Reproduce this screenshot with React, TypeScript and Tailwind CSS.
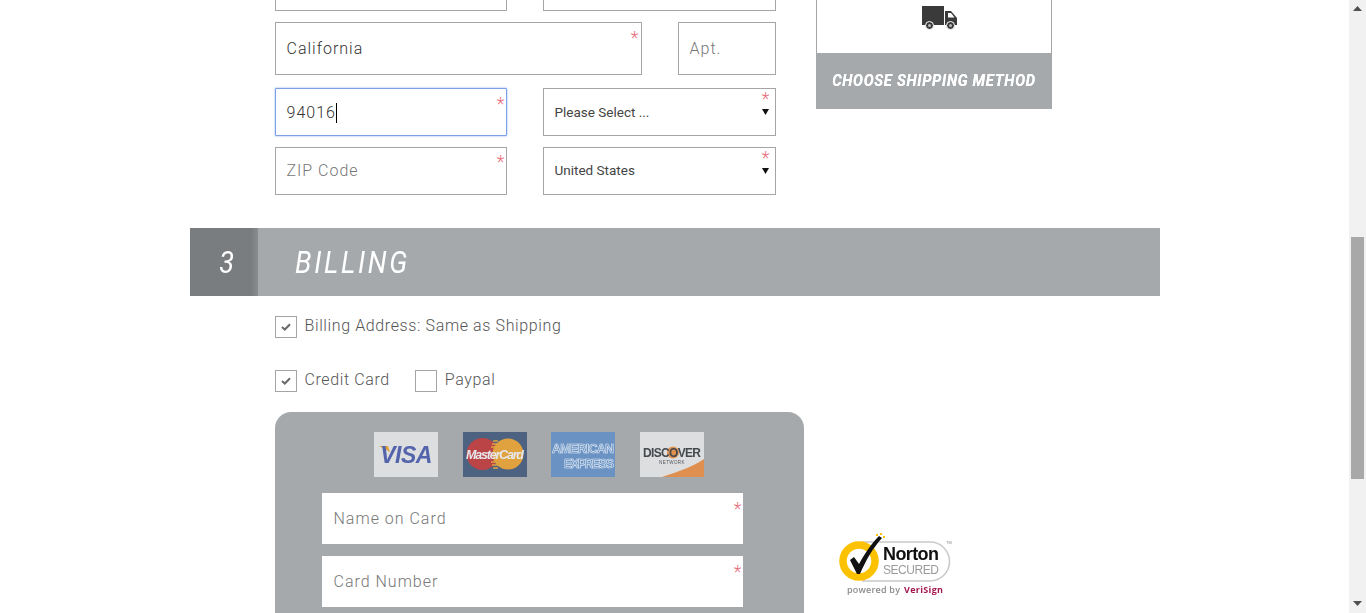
const roboto = "font-['Roboto',sans-serif]";

const Star = ({ className = "top-[2px] right-[2px]" }: { className?: string }) => (
  <span className={`absolute ${className} text-[18px] leading-[18px] font-light text-[#e8707c]`}>*</span>
);

const Field = ({
  text,
  value,
  required = true,
  caret = false,
  className = "",
  starClass,
}: {
  text: string;
  value?: boolean;
  required?: boolean;
  caret?: boolean;
  className?: string;
  starClass?: string;
}) => (
  <div
    className={`relative flex items-center bg-white pl-[11px] text-[16px] font-light tracking-[1px] ${
      value ? "text-[#333]" : "text-[#777]"
    } ${className}`}
  >
    <span>{text}</span>
    {caret && <span className="h-[20px] w-px bg-black" />}
    {required && <Star className={starClass} />}
  </div>
);

const SelectBox = ({ text, className = "" }: { text: string; className?: string }) => (
  <div className={`relative flex h-[48px] w-[233px] items-center border border-[#a5a5a5] bg-white pl-[11px] text-[13.500px] text-[#444] ${className}`}>
    <span>{text}</span>
    <Star className="top-[1px] right-[5px]" />
    <svg className="absolute top-[20px] right-[6px]" width="7" height="6" viewBox="0 0 7 6">
      <path d="M0 0h7L3.500 6z" fill="#111" />
    </svg>
  </div>
);

const Check = ({ checked }: { checked?: boolean }) => (
  <span className="flex h-[22px] w-[22px] shrink-0 items-center justify-center border border-[#a5a5a5] bg-white">
    {checked && (
      <svg width="10" height="8" viewBox="0 0 10 8">
        <path d="M1 4 3.800 6.500 9 1.200" fill="none" stroke="#6a6a6a" strokeWidth="2" />
      </svg>
    )}
  </span>
);

const Truck = () => (
  <svg width="36" height="24" viewBox="0 0 36 24">
    <path d="M0 0h22v19H0z" fill="#3a3a3a" />
    <path d="M23 5h6l6 7v7H23z" fill="#3a3a3a" />
    <path d="M26 7h3l3.500 4.500H26z" fill="#fff" />
    <circle cx="7.500" cy="19.500" r="4" fill="#3a3a3a" stroke="#fff" strokeWidth="1" />
    <circle cx="7.500" cy="19.500" r="1.500" fill="#bbb" />
    <circle cx="28.500" cy="19.500" r="4" fill="#3a3a3a" stroke="#fff" strokeWidth="1" />
    <circle cx="28.500" cy="19.500" r="1.500" fill="#bbb" />
  </svg>
);

const Visa = () => (
  <svg width="64" height="45" viewBox="0 0 64 45" className="blur-[0.4px]">
    <rect width="64" height="45" fill="#dcdee0" />
    <path d="M5 14h9l2 6z" fill="#e0a23c" />
    <text x="32" y="31" textAnchor="middle" fontFamily="Liberation Sans" fontWeight="700" fontStyle="italic" fontSize="23" fill="#5464ac" letterSpacing="-0.5">
      VISA
    </text>
  </svg>
);

const MasterCard = () => (
  <svg width="64" height="45" viewBox="0 0 64 45" className="blur-[0.4px]">
    <rect width="64" height="45" fill="#4d6180" />
    <circle cx="19.500" cy="22" r="16" fill="#bb4446" />
    <circle cx="45" cy="22" r="15.500" fill="#e0a23f" />
    <path d="M30 9h5M29 12h7M28 15h8M28 30h8M29 33h7M30 36h5" stroke="#e0a23f" strokeWidth="1.500" />
    <text x="3" y="27" fontFamily="Liberation Sans" fontWeight="700" fontStyle="italic" fontSize="12.500" fill="#e6e8ee" textLength="58">
      MasterCard
    </text>
  </svg>
);

const Amex = () => (
  <svg width="64" height="45" viewBox="0 0 64 45" className="blur-[0.3px]">
    <rect width="64" height="45" fill="#6a93c4" />
    <text x="1" y="21" fontFamily="Liberation Sans" fontWeight="700" fontSize="12.500" fill="#6a93c4" stroke="#d4e0ee" strokeWidth="0.700" textLength="62">
      AMERICAN
    </text>
    <text x="13" y="36" fontFamily="Liberation Sans" fontWeight="700" fontSize="12.500" fill="#6a93c4" stroke="#d4e0ee" strokeWidth="0.700" textLength="50">
      EXPRESS
    </text>
  </svg>
);

const Discover = () => (
  <svg width="64" height="45" viewBox="0 0 64 45" className="blur-[0.3px]">
    <rect width="64" height="45" fill="#dcdee0" />
    <path d="M22 45C40 39 54 34 64 27v18z" fill="#df8f4f" />
    <circle cx="33" cy="20.500" r="6" fill="#e0924e" />
    <text x="3" y="25" fontFamily="Liberation Sans" fontWeight="700" fontSize="12" fill="#45484c" textLength="58">
      DISCOVER
    </text>
    <text x="32" y="32" textAnchor="middle" fontFamily="Liberation Sans" fontSize="4.500" fill="#55585c" letterSpacing="0.4">
      NETWORK
    </text>
  </svg>
);

const Norton = () => (
  <svg width="116" height="66" viewBox="0 0 116 66" className="blur-[0.3px]">
    <path d="M24 9h68a19.500 19.500 0 0 1 0 39H24" fill="none" stroke="#c9c9c9" strokeWidth="1.500" />
    <circle cx="21" cy="28" r="16" fill="#fff" stroke="#fcc200" strokeWidth="7.500" />
    <path d="M12 27l4-3 5 7C27 20 34 10 41 3l3 2C35 15 28 27 22 41h-3z" fill="#111" />
    <path d="M38 1h2v2h-2zM42 0h2v2h-2zM45 3h2v2h-2z" fill="#fcc200" />
    <text x="45" y="27" fontFamily="Liberation Sans" fontWeight="700" fontSize="18" fill="#111" letterSpacing="-0.6">
      Norton
    </text>
    <text x="45" y="41" fontFamily="Liberation Sans" fontSize="12" fill="#9b9b9b" textLength="56">
      SECURED
    </text>
    <text x="9" y="60" fontFamily="Open Sans" fontWeight="600" fontSize="9" fill="#8c8c8c" textLength="53">
      powered by
    </text>
    <text x="66" y="60" fontFamily="Open Sans" fontWeight="700" fontSize="9" fill="#a3164f" textLength="39">
      VeriSign
    </text>
    <text x="108" y="11" fontFamily="Liberation Sans" fontSize="4" fill="#888">
      TM
    </text>
  </svg>
);

const Scrollbar = () => (
  <aside className="flex h-[613px] w-[17px] shrink-0 flex-col items-center bg-[#f1f1f1]">
    <svg className="mt-[6px]" width="9" height="5" viewBox="0 0 9 5">
      <path d="M4.500 0 9 5H0z" fill="#505050" />
    </svg>
    <div className="mt-[226px] h-[242px] w-[13px] bg-[#a8a8a8]" />
    <svg className="mt-[122px]" width="9" height="5" viewBox="0 0 9 5">
      <path d="M0 0h9L4.500 5z" fill="#505050" />
    </svg>
  </aside>
);

export default function App() {
  return (
    <div className={`flex h-[613px] w-full overflow-hidden bg-white ${roboto}`}>
      <main className="h-[613px] min-w-0 flex-1 overflow-hidden">
        <div className="mx-auto -mt-[37px] w-[970px]">
          <div className="flex pl-[85px]">
            <div className="flex w-[501px] flex-col">
              <div className="flex justify-between">
                <div className="h-[48px] w-[232px] border border-[#a5a5a5]" />
                <div className="h-[48px] w-[233px] border border-[#a5a5a5]" />
              </div>
              <div className="mt-[11px] flex justify-between">
                <Field text="California" value className="h-[53px] w-[367px] border border-[#a5a5a5]" starClass="top-[6px] right-[1px]" />
                <Field text="Apt." required={false} className="h-[53px] w-[98px] border border-[#a5a5a5]" />
              </div>
              <div className="mt-[13px] flex justify-between">
                <Field text="94016" value caret className="h-[48px] w-[232px] rounded-[1px] border border-[#7ba2e8] pt-px shadow-[0_0_2px_#7ba2e8]" starClass="top-[6px] right-[0px]" />
                <SelectBox text="Please Select ..." />
              </div>
              <div className="mt-[11px] flex justify-between">
                <Field text="ZIP Code" className="h-[48px] w-[232px] border border-[#a5a5a5]" starClass="top-[5px] right-[0px]" />
                <SelectBox text="United States" className="pb-px" />
              </div>
            </div>
            <div className="ml-[40px] w-[236px]">
              <div className="flex h-[90px] items-end justify-center border-x border-[#a5a5a5] pb-[23px] pl-[13px]">
                <Truck />
              </div>
              <div className="flex h-[56px] items-center justify-center bg-[#a5a9ac] text-[17px] font-bold whitespace-nowrap text-white italic">
                <span className="inline-block scale-x-[0.87] tracking-[0.800px] [text-shadow:0_0_0.5px_#fff]">CHOOSE SHIPPING METHOD</span>
              </div>
            </div>
          </div>

          <div className="mt-[33px] flex h-[68px] items-center bg-[#a5a9ac] text-white italic">
            <div className="flex h-[68px] w-[68px] items-center justify-center bg-gradient-to-r from-[#7a7d80] from-90% to-[#8a8d90] pl-[7px] text-[32px] font-normal">
              <span className="inline-block scale-x-[0.85]">3</span>
            </div>
            <span className="ml-[37px] inline-block origin-left scale-x-[0.85] text-[32px] font-normal tracking-[3.200px]">BILLING</span>
          </div>

          <div className="pl-[85px]">
            <label className="mt-[20px] flex items-start gap-[8px] text-[16px] font-light tracking-[0.620px] text-[#555]">
              <Check checked />
              <span className="-mt-[2px]">Billing Address: Same as Shipping</span>
            </label>
            <div className="mt-[32px] flex text-[16px] font-light tracking-[0.620px] text-[#555]">
              <label className="flex items-start gap-[8px]">
                <Check checked />
                <span className="-mt-[2px]">Credit Card</span>
              </label>
              <label className="ml-[25px] flex items-start gap-[8px]">
                <Check />
                <span className="-mt-[2px]">Paypal</span>
              </label>
            </div>

            <div className="mt-[20px] flex items-start">
              <div className="h-[300px] w-[529px] rounded-t-[16px] bg-[#a5a9ac] pt-[20px]">
                <div className="flex pl-[99px]">
                  <Visa />
                  <div className="ml-[25px]"><MasterCard /></div>
                  <div className="ml-[24px]"><Amex /></div>
                  <div className="ml-[25px]"><Discover /></div>
                </div>
                <div className="mt-[16px] flex flex-col gap-[12px] pl-[47px]">
                  <Field text="Name on Card" className="h-[51px] w-[421px] pl-[12px]" starClass="top-[7px] right-[0px]" />
                  <Field text="Card Number" className="h-[51px] w-[421px] pl-[12px]" starClass="top-[7px] right-[0px]" />
                </div>
              </div>
              <div className="mt-[121px] ml-[34px]">
                <Norton />
              </div>
            </div>
          </div>
        </div>
      </main>
      <Scrollbar />
    </div>
  );
}
